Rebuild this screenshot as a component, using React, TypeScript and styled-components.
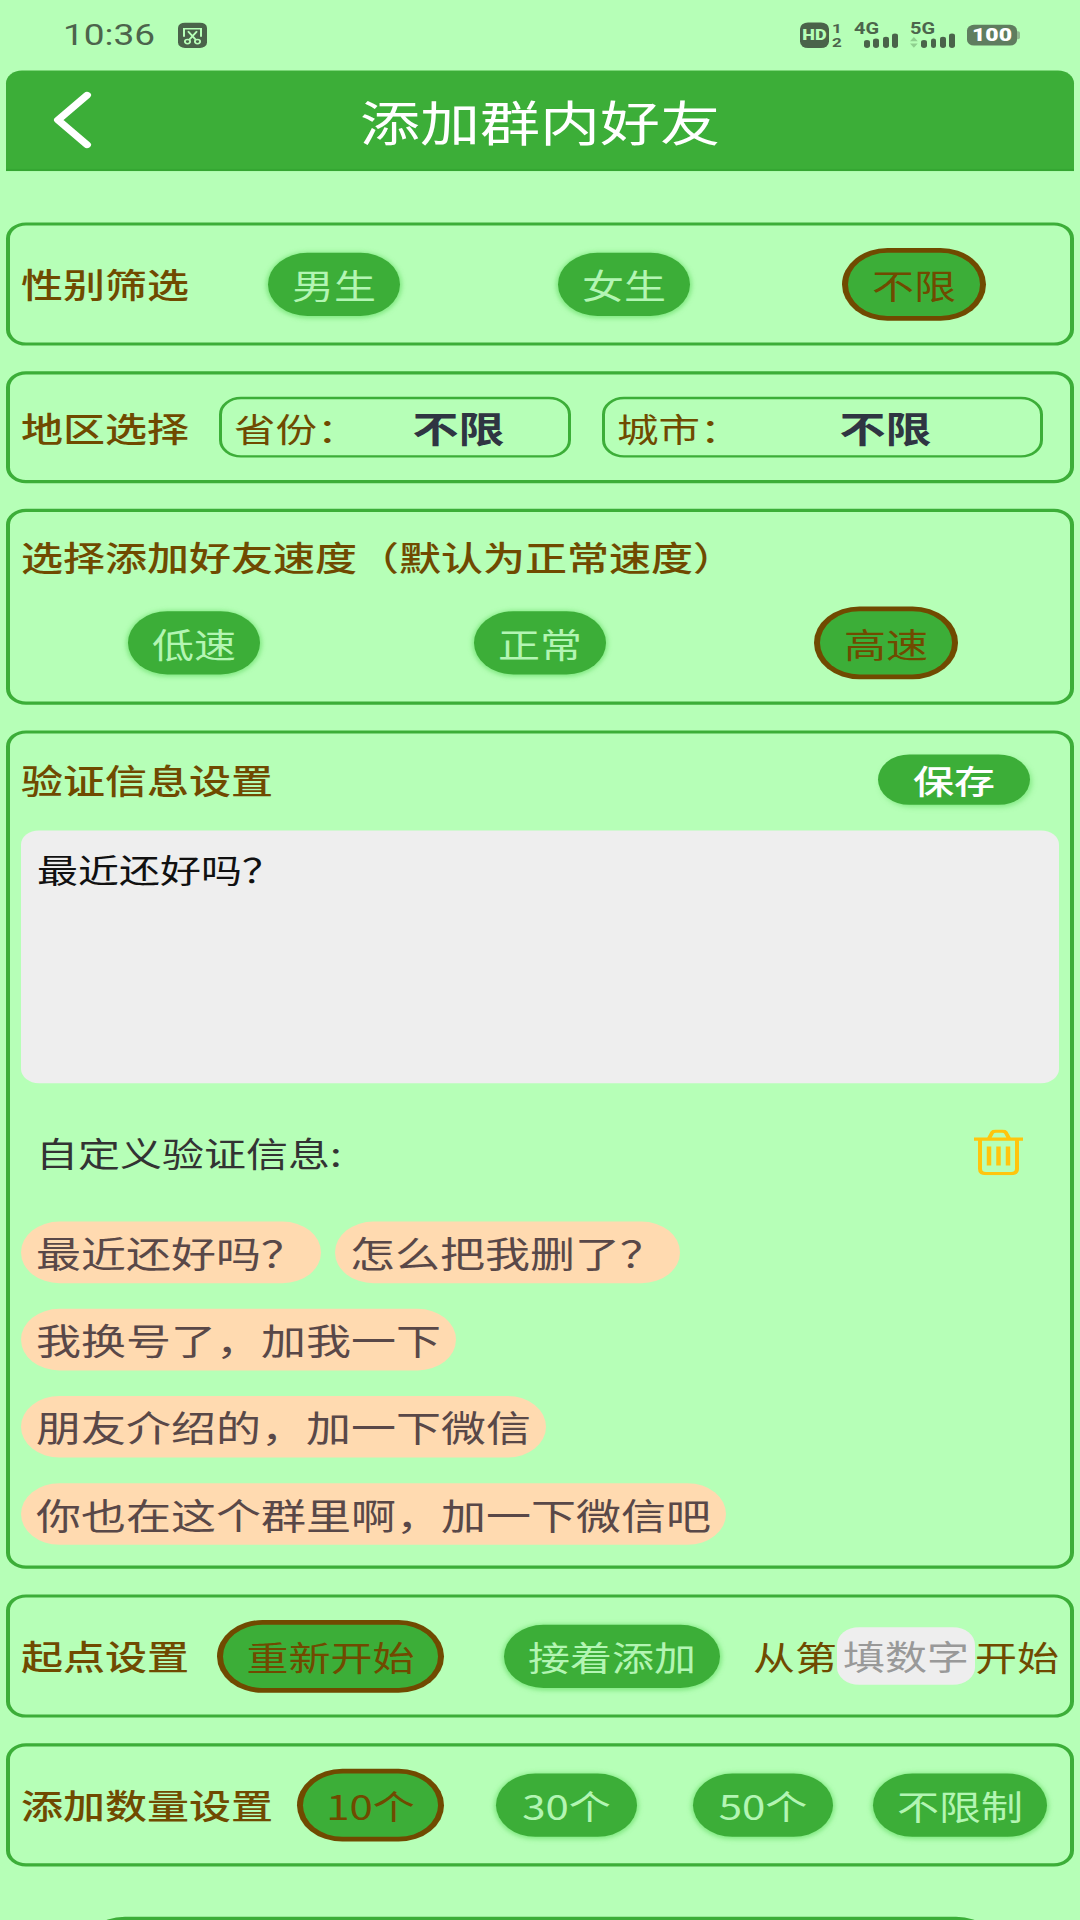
import React from "react";
import styled, { createGlobalStyle } from "styled-components";

const BG = "#b6ffb7";
const GREEN = "#3cae38";
const BROWN = "#704a00";
const FONT = `"Noto Sans CJK SC", "Noto Sans", sans-serif`;

const GlobalStyle = createGlobalStyle`
  html, body {
    margin: 0;
    height: 1920px;
    overflow: hidden;
    background: ${BG};
  }
  * {
    box-sizing: border-box;
  }
`;

// the phone capture is 1080x2400 squeezed to 1920, so the page is built tall and squashed
const Stage = styled.div`
  width: 1080px;
  height: 2400px;
  padding: 0 6px;
  background: ${BG};
  font-family: ${FONT};
  transform: scaleY(0.8);
  transform-origin: top left;
`;

const StatusBar = styled.div`
  height: 88px;
  display: flex;
  align-items: flex-start;
  padding: 28px 0 0 57px;
  color: #4c644c;
`;

const Clock = styled.span`
  width: 115px;
  height: 32px;
  font: 400 37px/32px Roboto, sans-serif;
`;

const StatusIcons = styled.div`
  margin-left: auto;
  display: flex;
  align-items: flex-start;
  padding-right: 57px;
`;

const HdBadge = styled.span`
  width: 29px;
  height: 32px;
  border-radius: 8px;
  background: #4a634a;
  color: ${BG};
  font: 900 18px/32px Roboto, sans-serif;
  text-align: center;
  white-space: nowrap;
`;

const SimSlots = styled.span`
  width: 10px;
  height: 32px;
  margin: 0 12px 0 3px;
  display: flex;
  flex-direction: column;
  justify-content: space-between;
  font: 700 17px/14px Roboto, sans-serif;
  text-align: center;
`;

const Signal = styled.span<{ $width?: number }>`
  width: ${(p) => p.$width ?? 44}px;
  height: 32px;
  margin-right: 12px;
  display: flex;
  flex-direction: column;
  justify-content: space-between;
  font: 700 20px/14px Roboto, sans-serif;
`;

const Bars = styled.span`
  display: flex;
  align-items: flex-end;
  justify-content: flex-end;
  gap: 3.5px;
  height: 18px;
`;

const Bar = styled.i<{ $h: number }>`
  width: 6px;
  height: ${(p) => p.$h}px;
  border-radius: 3px;
  background: #4a634a;
`;

const Battery = styled.span`
  width: 50px;
  height: 26px;
  margin-top: 3px;
  border-radius: 7px;
  background: #5f7d5f;
  color: #fff;
  font: 900 23px/26px Roboto, sans-serif;
  text-align: center;
  position: relative;

  &::after {
    content: "";
    position: absolute;
    right: -3px;
    top: 8px;
    width: 3px;
    height: 10px;
    border-radius: 0 2px 2px 0;
    background: #8fb98f;
  }
`;

const Header = styled.header`
  height: 126px;
  margin-bottom: 64px;
  display: grid;
  grid-template-columns: 1fr auto 1fr;
  align-items: center;
  background: ${GREEN};
  border-radius: 16px 16px 0 0;
  border-bottom: 3px solid #35a632;
  color: #fff;
`;

const BackIcon = styled.svg`
  width: 48px;
  height: 74px;
  margin-left: 42px;
  display: block;
`;

const Title = styled.h1`
  margin: 0;
  font-size: 60px;
  font-weight: 400;
  line-height: 70px;
`;

const Cards = styled.div`
  display: flex;
  flex-direction: column;
  gap: 32px;
`;

const Card = styled.section<{ $height: number }>`
  height: ${(p) => p.$height}px;
  border: 4px solid ${GREEN};
  border-radius: 20px;
  padding: 0 11px;
`;

const RowCard = styled(Card)`
  display: flex;
  align-items: center;
`;

const Label = styled.span<{ $width?: number }>`
  flex: none;
  ${(p) => (p.$width ? `width: ${p.$width}px;` : "")}
  font-size: 42px;
  font-weight: 500;
  line-height: 60px;
  color: ${BROWN};
  white-space: nowrap;
`;

const Options = styled.div<{ $gap?: number; $left?: number }>`
  display: flex;
  align-items: center;
  gap: ${(p) => p.$gap ?? 0}px;
  margin-left: ${(p) => p.$left ?? 0}px;
`;

const Pill = styled.span<{ $active?: boolean; $width?: number; $left?: number }>`
  flex: none;
  width: ${(p) => p.$width ?? 132}px;
  height: 79px;
  margin-left: ${(p) => p.$left ?? 0}px;
  border-radius: 40px;
  background: ${GREEN};
  color: ${(p) => (p.$active ? BROWN : "#b3f5b3")};
  font-size: 42px;
  line-height: 79px;
  text-align: center;
  white-space: nowrap;
  box-shadow: ${(p) =>
    p.$active ? `0 0 0 6px ${BROWN}` : "0 1px 5px 2px rgba(90, 215, 90, 0.55)"};
`;

const Pickers = styled.div`
  display: flex;
  gap: 31px;
  margin-left: 30px;
`;

const Picker = styled.div<{ $width: number; $valueLeft: number }>`
  width: ${(p) => p.$width}px;
  height: 76px;
  padding-left: 12px;
  display: flex;
  align-items: center;
  border: 3px solid ${GREEN};
  border-radius: 22px;
  color: ${BROWN};
  font-size: 41.5px;

  b {
    margin-left: ${(p) => p.$valueLeft}px;
    color: #2f3542;
    font-size: 46px;
    font-weight: 700;
  }
`;

const SpeedCard = styled(Card)`
  padding-top: 26px;
`;

const SpeedOptions = styled(Options)`
  margin-top: 38px;
`;

const MessageCard = styled(Card)`
  padding-top: 26px;
`;

const MessageHead = styled.div`
  display: flex;
  align-items: center;
  justify-content: space-between;
  padding-right: 29px;
`;

const SaveButton = styled.button`
  width: 152px;
  height: 63px;
  padding: 0;
  border: 0;
  border-radius: 32px;
  background: ${GREEN};
  color: #fff;
  font: 500 41px/63px ${FONT};
  box-shadow: 2px 3px 6px rgba(90, 215, 90, 0.5);
`;

const MessageBox = styled.div`
  height: 316px;
  margin-top: 32px;
  padding: 18px 16px;
  border-radius: 18px;
  background: #eeeeee;
  color: #111;
  font-size: 41px;
  line-height: 60px;
`;

const CustomRow = styled.div`
  height: 57px;
  margin-top: 58px;
  padding: 0 36px 0 15px;
  display: flex;
  align-items: center;
  justify-content: space-between;
  color: #333;
  font-size: 42px;
`;

const TrashIcon = styled.svg`
  width: 49px;
  height: 57px;
  display: block;
`;

const TagRows = styled.div`
  margin-top: 58px;
  display: flex;
  flex-direction: column;
  gap: 32px;
`;

const TagRow = styled.div`
  display: flex;
  gap: 14px;
`;

const Tag = styled.span`
  height: 77px;
  padding: 0 15px;
  border-radius: 39px;
  background: #ffdab0;
  color: #594848;
  font-size: 45px;
  line-height: 77px;
  white-space: nowrap;
`;

const StartFrom = styled.div`
  display: flex;
  align-items: center;
  margin-left: 33px;
`;

const StartText = styled.span`
  color: ${BROWN};
  font-size: 42px;
  white-space: nowrap;
`;

const NumberInput = styled.span`
  width: 138px;
  height: 72px;
  border-radius: 22px;
  background: #eeeeee;
  color: #999;
  font-size: 42px;
  line-height: 72px;
  text-align: center;
  white-space: nowrap;
`;

const StartButton = styled.div`
  width: 921px;
  height: 110px;
  margin: 63px 0 0 74px;
  border-radius: 45px;
  background: ${GREEN};
`;

const SignalBars: React.FC<{ arrows?: boolean }> = ({ arrows }) => (
  <Bars>
    {arrows && (
      <svg width="8" height="14" viewBox="0 0 8 14" fill="#8fcf8f">
        <path d="M4 0l4 5.500H0zM4 14L0 8.500h8z" />
      </svg>
    )}
    <Bar $h={10} />
    <Bar $h={12} />
    <Bar $h={14} />
    <Bar $h={18} />
  </Bars>
);

export default function App() {
  return (
    <>
      <GlobalStyle />
      <Stage>
        <StatusBar>
          <Clock>10:36</Clock>
          <svg width="29" height="32" viewBox="0 0 29 32">
            <rect width="29" height="32" rx="7" fill="#4a634a" />
            <path
              d="M6 18V8h17v10M10 11l8 11M19 11l-8 11"
              fill="none"
              stroke="#b6ffb7"
              strokeWidth="2"
            />
            <circle cx="9.500" cy="24" r="2.600" fill="none" stroke="#b6ffb7" strokeWidth="1.800" />
            <circle cx="19.500" cy="24" r="2.600" fill="none" stroke="#b6ffb7" strokeWidth="1.800" />
          </svg>
          <StatusIcons>
            <HdBadge>HD</HdBadge>
            <SimSlots>
              <span>1</span>
              <span>2</span>
            </SimSlots>
            <Signal>
              <span>4G</span>
              <SignalBars />
            </Signal>
            <Signal $width={45}>
              <span>5G</span>
              <SignalBars arrows />
            </Signal>
            <Battery>100</Battery>
          </StatusIcons>
        </StatusBar>

        <Header>
          <BackIcon viewBox="0 0 48 74">
            <path
              d="M39 6L10 37l29 31"
              fill="none"
              stroke="#fff"
              strokeWidth="8"
              strokeLinecap="round"
              strokeLinejoin="round"
            />
          </BackIcon>
          <Title>添加群内好友</Title>
        </Header>

        <Cards>
          <RowCard $height={154}>
            <Label $width={247}>性别筛选</Label>
            <Options $gap={158}>
              <Pill>男生</Pill>
              <Pill>女生</Pill>
              <Pill $active>不限</Pill>
            </Options>
          </RowCard>

          <RowCard $height={140}>
            <Label>地区选择</Label>
            <Pickers>
              <Picker $width={352} $valueLeft={54}>
                省份：
                <b>不限</b>
              </Picker>
              <Picker $width={441} $valueLeft={98}>
                城市：
                <b>不限</b>
              </Picker>
            </Pickers>
          </RowCard>

          <SpeedCard $height={245}>
            <Label>选择添加好友速度（默认为正常速度）</Label>
            <SpeedOptions $gap={214} $left={107}>
              <Pill>低速</Pill>
              <Pill>正常</Pill>
              <Pill $active>高速</Pill>
            </SpeedOptions>
          </SpeedCard>

          <MessageCard $height={1048}>
            <MessageHead>
              <Label>验证信息设置</Label>
              <SaveButton>保存</SaveButton>
            </MessageHead>
            <MessageBox>最近还好吗？</MessageBox>
            <CustomRow>
              <span>自定义验证信息:</span>
              <TrashIcon viewBox="0 0 49 57" fill="none" stroke="#ffc50d" strokeWidth="4">
                <path d="M0 12h49M15 11l3-7q1-2 4-2h6q3 0 4 2l3 7" />
                <path d="M6 12v37q0 6 6 6h25q6 0 6-6V12" />
                <path d="M15 21v24M24.500 21v24M34 21v24" strokeWidth="4.500" />
              </TrashIcon>
            </CustomRow>
            <TagRows>
              <TagRow>
                <Tag>最近还好吗？</Tag>
                <Tag>怎么把我删了？</Tag>
              </TagRow>
              <TagRow>
                <Tag>我换号了，加我一下</Tag>
              </TagRow>
              <TagRow>
                <Tag>朋友介绍的，加一下微信</Tag>
              </TagRow>
              <TagRow>
                <Tag>你也在这个群里啊，加一下微信吧</Tag>
              </TagRow>
            </TagRows>
          </MessageCard>

          <RowCard $height={154}>
            <Label $width={202}>起点设置</Label>
            <Options $gap={66}>
              <Pill $active $width={215}>
                重新开始
              </Pill>
              <Pill $width={216}>接着添加</Pill>
            </Options>
            <StartFrom>
              <StartText>从第</StartText>
              <NumberInput>填数字</NumberInput>
              <StartText>开始</StartText>
            </StartFrom>
          </RowCard>

          <RowCard $height={154}>
            <Label $width={282}>添加数量设置</Label>
            <Options>
              <Pill $active $width={135}>
                10个
              </Pill>
              <Pill $width={141} $left={58}>
                30个
              </Pill>
              <Pill $width={140} $left={56}>
                50个
              </Pill>
              <Pill $width={174} $left={40}>
                不限制
              </Pill>
            </Options>
          </RowCard>
        </Cards>

        <StartButton />
      </Stage>
    </>
  );
}
